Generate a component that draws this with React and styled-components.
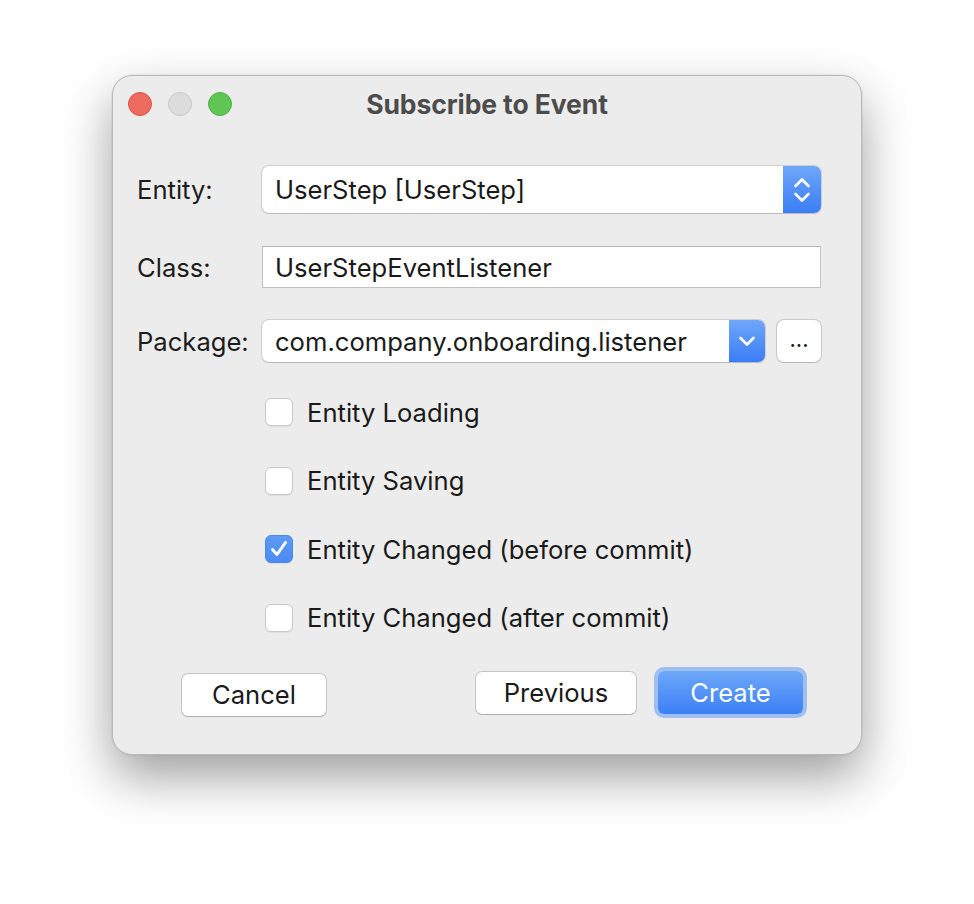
import React, { useState } from "react";
import styled, { createGlobalStyle } from "styled-components";

const GlobalStyle = createGlobalStyle`
  html, body {
    margin: 0;
    padding: 0;
    background: #ffffff;
  }
  body {
    font-family: "Inter", "Liberation Sans", sans-serif;
    -webkit-font-smoothing: antialiased;
  }
`;

const Page = styled.div`
  display: flex;
  justify-content: center;
  padding-top: 75px;
  height: 904px;
  box-sizing: border-box;
`;

const Window = styled.div`
  width: 750px;
  height: 680px;
  box-sizing: border-box;
  background: #ececec;
  border-radius: 20px;
  border: 1px solid #b9b9b9;
  box-shadow: 0 22px 50px rgba(0, 0, 0, 0.38), 0 0 0 1px rgba(0, 0, 0, 0.04);
  display: flex;
  flex-direction: column;
  position: relative;
`;

const TitleBar = styled.div`
  height: 56px;
  display: flex;
  align-items: center;
  justify-content: center;
  position: relative;
`;

const Lights = styled.div`
  position: absolute;
  left: 15px;
  top: 16px;
  display: flex;
  gap: 16px;
`;

const Light = styled.span`
  width: 24px;
  height: 24px;
  border-radius: 50%;
  box-sizing: border-box;
  background: ${(p) => p.$bg};
  border: 1px solid ${(p) => p.$border};
`;

const Title = styled.div`
  font-size: 26.5px;
  font-weight: 700;
  color: #4c4c4c;
  letter-spacing: -0.1px;
`;

const Content = styled.div`
  display: flex;
  flex-direction: column;
  padding: 34px 40px 0 24px;
`;

const FormRow = styled.div`
  display: grid;
  grid-template-columns: 125px 1fr;
  align-items: center;
  margin-bottom: ${(p) => p.$mb}px;
`;

const Label = styled.label`
  font-size: 25.6px;
  color: #1c1c1c;
`;

const Combo = styled.div`
  display: flex;
  height: ${(p) => p.$h}px;
  background: #fff;
  border-radius: 7px;
  box-shadow: 0 0 0 1px rgba(0, 0, 0, 0.12), 0 1px 1px rgba(0, 0, 0, 0.1);
  overflow: hidden;
  flex: 1;
`;

const ComboText = styled.div`
  flex: 1;
  display: flex;
  align-items: center;
  padding-left: 13px;
  font-size: 25.6px;
  color: #1a1a1a;
`;

const ComboArrow = styled.div`
  width: ${(p) => p.$w}px;
  background: linear-gradient(#6fa7f9, #3a7df6);
  display: flex;
  align-items: center;
  justify-content: center;
`;

const TextField = styled.div`
  height: 42px;
  box-sizing: border-box;
  background: #fff;
  border: 1px solid #c2c2c2;
  border-top-color: #b5b5b5;
  display: flex;
  align-items: center;
  padding-left: 12px;
  font-size: 25.6px;
  color: #1a1a1a;
`;

const PackageWrap = styled.div`
  display: flex;
  gap: 12px;
`;

const SmallButton = styled.div`
  width: 44px;
  height: 42px;
  box-sizing: border-box;
  background: #fff;
  border-radius: 7px;
  box-shadow: 0 0 0 1px rgba(0, 0, 0, 0.14), 0 1px 1px rgba(0, 0, 0, 0.1);
  display: flex;
  align-items: center;
  justify-content: center;
  font-size: 22px;
  color: #1a1a1a;
  padding-bottom: 4px;
`;

const Checks = styled.div`
  display: flex;
  flex-direction: column;
  gap: 40.5px;
  padding-left: 128px;
`;

const CheckRow = styled.div`
  display: flex;
  align-items: center;
  height: 28px;
  gap: 14px;
  cursor: default;
`;

const Box = styled.span`
  width: 28px;
  height: 28px;
  box-sizing: border-box;
  border-radius: 6px;
  display: flex;
  align-items: center;
  justify-content: center;
  background: ${(p) => (p.$on ? "linear-gradient(#5e9af5, #4a8bf3)" : "#fff")};
  border: 1px solid ${(p) => (p.$on ? "#4a88ee" : "#c9c9c9")};
  box-shadow: 0 1px 1px rgba(0, 0, 0, 0.06);
`;

const CheckText = styled.span`
  font-size: 25.6px;
  color: #1a1a1a;
`;

const Footer = styled.div`
  display: flex;
  justify-content: space-between;
  align-items: center;
  padding: 38px 58px 0 69px;
`;

const RightGroup = styled.div`
  display: flex;
  align-items: center;
  gap: 22px;
`;

const Button = styled.button`
  width: ${(p) => p.$w}px;
  height: 42px;
  box-sizing: border-box;
  border-radius: 6px;
  font-family: inherit;
  font-size: 25.6px;
  background: #fff;
  color: #1a1a1a;
  border: none;
  box-shadow: 0 0 0 1px rgba(0, 0, 0, 0.16), 0 1px 1px rgba(0, 0, 0, 0.12);
  margin-top: ${(p) => p.$mt || 0}px;
  padding: 0;
`;

const PrimaryButton = styled(Button)`
  background: linear-gradient(#6ea8f9, #3b7ff6);
  color: #fff;
  box-shadow: 0 0 0 4px rgba(100, 155, 240, 0.55);
  height: 43px;
`;

const ChevronUpDown = () => (
  <svg width="18" height="28" viewBox="0 0 18 28" fill="none" stroke="#fff" strokeWidth="2.6" strokeLinecap="round" strokeLinejoin="round">
    <path d="M2.5 10 L9 3.5 L15.5 10" />
    <path d="M2.5 18 L9 24.5 L15.5 18" />
  </svg>
);

const ChevronDown = () => (
  <svg width="18" height="12" viewBox="0 0 18 12" fill="none" stroke="#fff" strokeWidth="2.6" strokeLinecap="round" strokeLinejoin="round">
    <path d="M2.5 3 L9 9.5 L15.5 3" />
  </svg>
);

const Check = () => (
  <svg width="20" height="20" viewBox="0 0 20 20" fill="none" stroke="#fff" strokeWidth="3" strokeLinecap="round" strokeLinejoin="round">
    <path d="M3.5 10.5 L8 15.5 L16.5 3.5" />
  </svg>
);

const options = [
  { label: "Entity Loading", on: false },
  { label: "Entity Saving", on: false },
  { label: "Entity Changed (before commit)", on: true },
  { label: "Entity Changed (after commit)", on: false },
];

const App = () => {
  const [checks, setChecks] = useState(options);

  const toggle = (i) =>
    setChecks((c) => c.map((o, idx) => (idx === i ? { ...o, on: !o.on } : o)));

  return (
    <>
      <GlobalStyle />
      <Page>
        <Window>
          <TitleBar>
            <Lights>
              <Light $bg="#ee6a5f" $border="#d5534a" />
              <Light $bg="#dcdcdc" $border="#c8c8c8" />
              <Light $bg="#61c554" $border="#4fae42" />
            </Lights>
            <Title>Subscribe to Event</Title>
          </TitleBar>
          <Content>
            <FormRow $mb={33}>
              <Label>Entity:</Label>
              <Combo $h={47}>
                <ComboText>UserStep [UserStep]</ComboText>
                <ComboArrow $w={38}>
                  <ChevronUpDown />
                </ComboArrow>
              </Combo>
            </FormRow>
            <FormRow $mb={32}>
              <Label>Class:</Label>
              <TextField>UserStepEventListener</TextField>
            </FormRow>
            <FormRow $mb={36}>
              <Label>Package:</Label>
              <PackageWrap>
                <Combo $h={42}>
                  <ComboText>com.company.onboarding.listener</ComboText>
                  <ComboArrow $w={36}>
                    <ChevronDown />
                  </ComboArrow>
                </Combo>
                <SmallButton>...</SmallButton>
              </PackageWrap>
            </FormRow>
            <Checks>
              {checks.map((o, i) => (
                <CheckRow key={o.label} onClick={() => toggle(i)}>
                  <Box $on={o.on}>{o.on && <Check />}</Box>
                  <CheckText>{o.label}</CheckText>
                </CheckRow>
              ))}
            </Checks>
          </Content>
          <Footer>
            <Button $w={144} $mt={4}>Cancel</Button>
            <RightGroup>
              <Button $w={160}>Previous</Button>
              <PrimaryButton $w={145}>Create</PrimaryButton>
            </RightGroup>
          </Footer>
        </Window>
      </Page>
    </>
  );
};

export default App;
